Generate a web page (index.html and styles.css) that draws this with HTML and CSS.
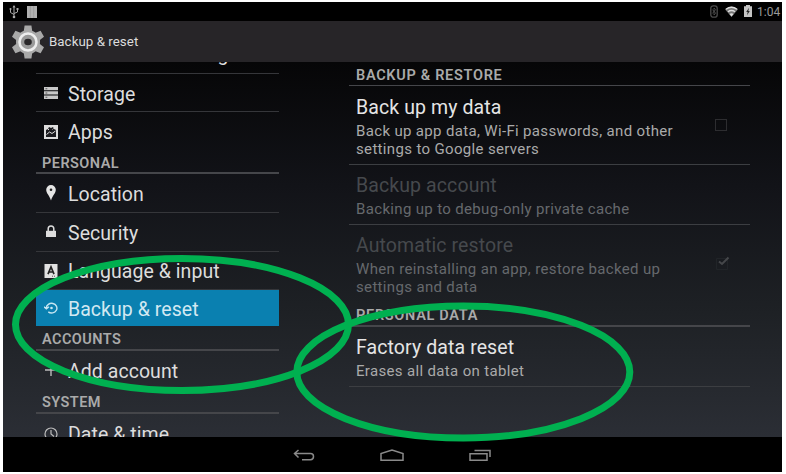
FILE: index.html
```html
<!DOCTYPE html>
<html lang="en">
<head>
<meta charset="utf-8">
<title>Backup &amp; reset</title>
<link rel="stylesheet" href="styles.css">
</head>
<body>
<div class="tablet">
  <header class="status">
    <svg class="usb" width="10" height="14" viewBox="0 0 10 14" fill="none" stroke="#aaa"><path d="M5 1v11M1.500 4v3.500L5 9.500M8.500 4v3L5 8.500"/><path d="M5 0l1.500 2.500h-3z" fill="#aaa" stroke="none"/><circle cx="5" cy="12" r="1.300" fill="#aaa" stroke="none"/><circle cx="1.500" cy="4" r="1" fill="#aaa" stroke="none"/><path d="M7.500 3h2v2h-2z" fill="#aaa" stroke="none"/></svg>
    <svg class="bars" width="10" height="12" viewBox="0 0 10 12"><path fill="#b0b0b0" d="M0 0h10v12H0z"/><path stroke="#888" stroke-width=".5" d="M3.300 0v12M6.700 0v12"/></svg>
    <span class="grow"></span>
    <svg class="bt" width="8" height="13" viewBox="0 0 8 13" fill="none"><rect x=".8" y=".8" width="6.400" height="11.400" rx="2.500" stroke="#4c4c4c" stroke-width="1.300"/><path d="M2.300 4.500l3.400 3.700L4 10V3l1.700 1.600L2.300 8.500" stroke="#555" stroke-width=".8"/></svg>
    <svg class="wifi" width="13" height="11" viewBox="0 0 13 11"><path fill="#777" d="M0 3.200Q6.500-2 13 3.200L6.500 11z"/><path fill="none" stroke="#ddd" stroke-width="1.400" d="M1 3.300q5.500-4 11 0M3 5.700q3.500-2.500 7 0"/><path fill="#ddd" d="M4.500 8q2-1.500 4 0l-2 2.500z"/></svg>
    <svg class="battery" width="8" height="12" viewBox="0 0 8 12"><path fill="#c4c4c4" d="M2 0h4v1.200h2V12H0V1.200h2z"/><path fill="#222" d="M5 2.700L2.200 7h1.500L3 10.300 5.800 6H4.300z"/></svg>
    <span class="clock">1:04</span>
  </header>
  <div class="actionbar">
    <svg width="32" height="34" viewBox="-16 -17 32 34">
      <g fill="#a9a9a9"><g id="t"><path d="M-3.400-16.500h6.800l1.200 8h-9.200z"/><path d="M-3.400 16.500h6.800l1.200-8h-9.200z"/></g><use href="#t" transform="rotate(60)"/><use href="#t" transform="rotate(120)"/><circle r="12"/></g>
      <circle r="8.500" fill="#999" stroke="#ededed" stroke-width="2.600"/><ellipse rx="3.800" ry="3.200" fill="#292729"/>
    </svg>
    <h1>Backup &amp; reset</h1>
  </div>
  <main class="panes">
    <nav class="side">
      <div class="item display"><span class="label">Screenshot setting</span></div>
      <div class="item storage"><svg width="14" height="14" viewBox="0 0 14 14"><path fill="#c8c8c8" d="M0 1h14v3.300H0zM0 5.300h14v3.300H0zM0 9.600h14v3.300H0z"/><path fill="#555" d="M1.500 2.200h1.800v1H1.500zM1.500 6.500h1.800v1H1.500zM1.500 10.800h1.800v1H1.500z"/></svg><span class="label">Storage</span></div>
      <div class="item apps"><svg width="14" height="14" viewBox="0 0 14 14"><path fill="#ddd" d="M0 0h14v14H0z"/><path fill="#1b1b1f" d="M2 5l2-1 1-2 2 1 2-1 1 2 2 1v7H2z"/><path d="M2.500 9.500l3-2.500 2.500 1.500L11.500 6M4 4l1 1M9.500 3.500l-1 1" stroke="#ddd" fill="none"/></svg><span class="label">Apps</span></div>
      <h2 class="personal">PERSONAL</h2>
      <div class="item"><svg width="14" height="16" viewBox="0 0 14 16"><path fill="#e5e5e5" d="M7 0a4.800 4.800 0 0 1 4.800 4.800C11.800 8.500 8.500 10.500 7 15.500 5.500 10.500 2.200 8.500 2.200 4.800A4.800 4.800 0 0 1 7 0z"/><circle cx="7" cy="4.800" r="1.300" fill="#222"/></svg><span class="label">Location</span></div>
      <div class="item"><svg width="14" height="14" viewBox="0 0 14 14"><path fill="#ddd" d="M2 5.800h10V12H2z"/><path fill="none" stroke="#ddd" stroke-width="1.500" d="M4.200 6V3.700a2.800 2.800 0 0 1 5.600 0V6"/></svg><span class="label">Security</span></div>
      <div class="item language"><svg width="14" height="14" viewBox="0 0 14 14"><path fill="#e2e2e2" d="M.5 0h13v14H.5z"/><path fill="none" stroke="#222" stroke-width="1.700" d="M4 10.200L7 3l3 7.200M5 8h4"/><path stroke="#333" stroke-width=".8" stroke-dasharray="1" d="M8 12.200h4"/></svg><span class="label">Language &amp; input</span></div>
      <div class="item selected"><svg width="14" height="14" viewBox="0 0 14 14"><path fill="none" stroke="#c7e6f2" stroke-width="1.400" d="M2.300 7A5.300 4.800 0 1 1 4.300 10.900M0 5.800l2.400 2L5 5.800"/><circle cx="7.500" cy="7" r="1.300" fill="#c7e6f2"/></svg><span class="label">Backup &amp; reset</span></div>
      <h2 class="accounts">ACCOUNTS</h2>
      <div class="item add"><svg width="14" height="14" viewBox="0 0 14 14"><path stroke="#bbb" stroke-width="1.400" d="M7 1v12M1 7h12"/></svg><span class="label">Add account</span></div>
      <h2 class="system">SYSTEM</h2>
      <div class="item date"><svg width="14" height="14" viewBox="0 0 14 14" fill="none" stroke="#bbb" stroke-width="1.200"><circle cx="7" cy="7" r="6"/><path d="M7 3v4l3 2.500"/></svg><span class="label">Date &amp; time</span></div>
    </nav>
    <section class="detail">
      <h2 class="restore">BACKUP &amp; RESTORE</h2>
      <article class="pref backup"><div class="copy"><h3>Back up my data</h3><p>Back up app data, Wi-Fi passwords, and other<br>settings to Google servers</p></div><span class="box"></span></article>
      <article class="pref account off"><div class="copy"><h3>Backup account</h3><p>Backing up to debug-only private cache</p></div></article>
      <article class="pref auto off"><div class="copy"><h3>Automatic restore</h3><p>When reinstalling an app, restore backed up<br>settings and data</p></div><svg class="check" width="16" height="14" viewBox="0 0 16 14" fill="none"><path stroke="#212428" d="M1.500 2.500h11v11h-11z"/><path stroke="#45474a" stroke-width="2" d="M4 5.500l3 2.500 6.500-6.500"/></svg></article>
      <h2 class="data">PERSONAL DATA</h2>
      <article class="pref factory"><div class="copy"><h3>Factory data reset</h3><p>Erases all data on tablet</p></div></article>
    </section>
  </main>
  <footer class="navbar">
    <svg width="22" height="12" viewBox="0 0 22 12"><path d="M5.500 1L1.500 4.500l4 4M1.500 4.500H17.500Q20.500 4.500 20.500 7.500T17.500 10.800H9"/></svg>
    <svg width="24" height="12" viewBox="0 0 24 12"><path d="M1 11.200V4.500L12 1l11 3.500v6.700z"/></svg>
    <svg width="22" height="12" viewBox="0 0 22 12"><path d="M1 4.800h17v6.400H1zM5.500 1.500h15.500v6.500"/></svg>
  </footer>
</div>
<svg class="marks" width="786" height="474" viewBox="0 0 786 474"><ellipse cx="182" cy="324.500" rx="166.500" ry="66"/><ellipse cx="463.300" cy="372" rx="166.500" ry="66"/></svg>
</body>
</html>
```
FILE: styles.css
```css
* { box-sizing: border-box; }
body { margin: 0; padding: 2px 4px 2px 3px; width: 786px; height: 474px; overflow: hidden; background: #fff; font-family: Roboto, sans-serif; }
h1, h2, h3, p { margin: 0; font-weight: 400; white-space: nowrap; }
svg { display: block; flex: none; }
.tablet { width: 779px; height: 470px; display: flex; flex-direction: column; background: #000; overflow: hidden; }
.status { height: 19px; flex: none; display: flex; align-items: center; padding: 0 1px 0 6px; }
.bars { margin-left: 8px; }
.grow { flex: 1; }
.wifi { margin-left: 7px; }
.battery { margin-left: 6px; margin-top: -2px; }
.clock { margin-left: 5px; width: 24px; font-size: 12px; line-height: 19px; color: #999; padding-top: 2px; white-space: nowrap; }
.actionbar { height: 41px; flex: none; display: flex; align-items: center; padding-left: 9px; background: #272528; }
.actionbar h1 { font-size: 13.300px; color: #ddd; margin-left: 5px; letter-spacing: .05px; }
.panes { height: 375px; flex: none; display: flex; overflow: hidden; background: linear-gradient(#060607, #121318 33%, #1e2125 67%, #2b2e35); }
.side { width: 243px; margin-left: 33px; flex: none; }
.item { height: 39px; border-bottom: 1px solid #35363a; display: flex; align-items: center; padding-left: 8px; }
.label { font-size: 19.500px; line-height: 24px; letter-spacing: .05px; color: #ddd; margin-left: 10px; padding-top: 4px; white-space: nowrap; }
.display { height: 12px; align-items: flex-end; overflow: hidden; }
.display .label { margin-left: 24px; margin-bottom: 6px; padding: 0; letter-spacing: -.12px; }
.storage { height: 38px; }
.storage .label { padding-top: 4px; }
.apps { height: 40px; border: 0; }
.apps .label { padding-top: 2px; }
h2 { font-size: 14.500px; font-weight: 600; line-height: 20px; letter-spacing: .45px; color: #aaa; padding-left: 6px; border-bottom: 2px solid #45464a; }
.personal { height: 22px; line-height: 24px; }
.language { height: 38px; }
.language .label { padding-top: 3px; }
.side .selected { height: 36px; background: #0a80b0; border: 0; }
.selected .label { color: #d3e9f2; padding-top: 4px; }
.accounts { height: 25px; line-height: 28px; }
.side .add { height: 38px; border: 0; }
.add .label { padding-top: 4px; }
.system { height: 25px; line-height: 28px; }
.side .date { height: 40px; border: 0; }
.date .label { padding-top: 2px; }
.detail { width: 401px; margin-left: 70px; }
.detail h2 { padding-left: 7px; letter-spacing: .7px; }
.restore { height: 24px; line-height: 27px; border-bottom-width: 1px; }
.pref { display: flex; border-bottom: 1px solid #3c3e42; padding-left: 7px; }
.pref h3 { font-size: 19.500px; line-height: 26px; color: #e5e5e5; letter-spacing: .1px; }
.pref p { font-size: 15px; line-height: 18px; letter-spacing: .34px; color: #aaa; padding-top: 1px; }
.copy { width: 359px; }
.backup { height: 79px; padding-top: 9px; }
.account { height: 60px; padding-top: 8px; }
.auto { height: 80px; padding-top: 8px; border: 0; }
.pref.off h3 { color: #46494d; }
.pref.off p { color: #66696d; }
.box { width: 12px; height: 12px; border: 1px solid #2d2d30; margin-top: 24px; }
.check { margin-top: 23px; }
.data { height: 22px; line-height: 22px; }
.factory { height: 60px; padding-top: 8px; }
.navbar { height: 35px; display: flex; gap: 65px; align-items: center; padding: 0 0 0 290px; fill: none; stroke: #8a8a8a; stroke-width: 1.500; }
.marks { position: absolute; left: 0; top: 0; fill: none; stroke: #00b050; stroke-width: 7; }
```
